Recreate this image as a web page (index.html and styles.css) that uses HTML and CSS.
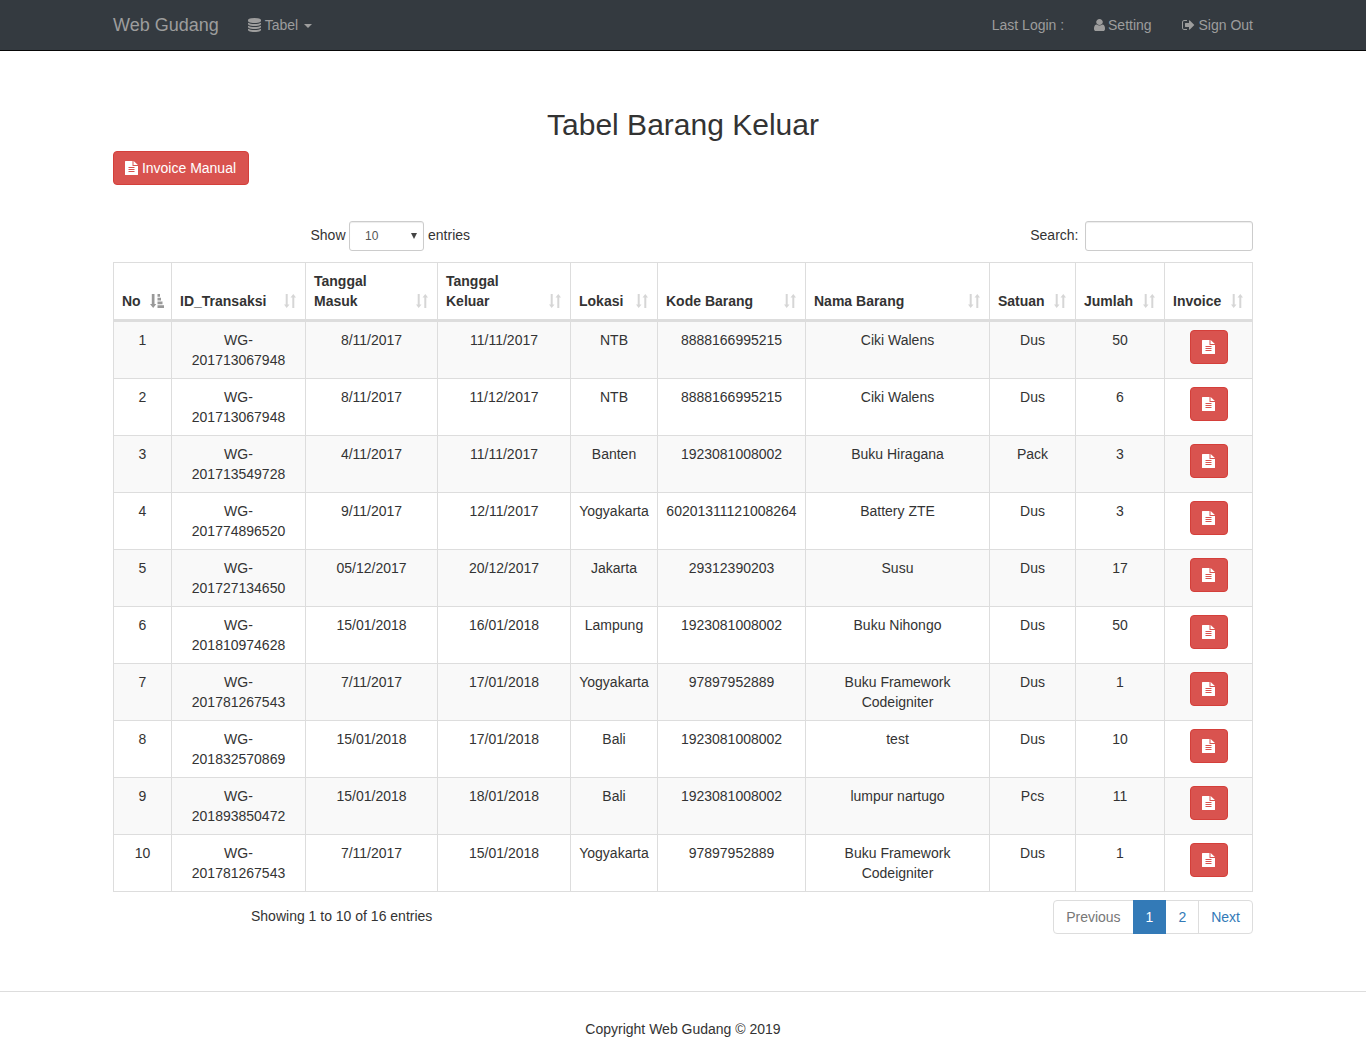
FILE: index.html
```html
<!DOCTYPE html>
<html lang="id">
<head>
<meta charset="utf-8">
<title>Web Gudang | Tabel Barang Keluar</title>
<link rel="stylesheet" href="styles.css">
</head>
<body>
<svg class="sprite" aria-hidden="true">
  <symbol id="database" viewBox="128 0 1536 1792" preserveAspectRatio="none"><path d="M896 768q237 0 443-43t325-127v170q0 69-103 128t-280 93.5-385 34.5-385-34.5-280-93.5-103-128v-170q119 84 325 127t443 43zm0 768q237 0 443-43t325-127v170q0 69-103 128t-280 93.5-385 34.5-385-34.5-280-93.5-103-128v-170q119 84 325 127t443 43zm0-384q237 0 443-43t325-127v170q0 69-103 128t-280 93.5-385 34.5-385-34.5-280-93.5-103-128v-170q119 84 325 127t443 43zm0-1152q208 0 385 34.5t280 93.5 103 128v128q0 69-103 128t-280 93.5-385 34.5-385-34.5-280-93.5-103-128v-128q0-69 103-128t280-93.5 385-34.5z"/></symbol>
  <symbol id="user" viewBox="256 0 1280 1792" preserveAspectRatio="none"><path d="M1536 1399q0 109-62.5 187t-150.5 78h-854q-88 0-150.5-78t-62.5-187q0-85 8.5-160.5t31.5-152 58.5-131 94-89 134.5-34.5q131 128 313 128t313-128q76 0 134.5 34.5t94 89 58.5 131 31.5 152 8.5 160.5zm-256-887q0 159-112.5 271.5t-271.500 112.5-271.500-112.500-112.500-271.500 112.500-271.500 271.500-112.500 271.500 112.500 112.500 271.500z"/></symbol>
  <symbol id="sign-out" viewBox="64 0 1664 1792"><path d="M704 1440q0 4 1 20t.5 26.5-3 23.5-10 19.5-20.5 6.5h-320q-119 0-203.5-84.5t-84.5-203.5v-704q0-119 84.5-203.5t203.5-84.5h320q13 0 22.5 9.5t9.5 22.5q0 4 1 20t.5 26.5-3 23.5-10 19.5-20.5 6.5h-320q-66 0-113 47t-47 113v704q0 66 47 113t113 47h312l11.5 1 11.5 3 8 5.5 7 9 2 13.5zm928-544q0 26-19 45l-544 544q-19 19-45 19t-45-19-19-45v-288h-448q-26 0-45-19t-19-45v-384q0-26 19-45t45-19h448v-288q0-26 19-45t45-19 45 19l544 544q19 19 19 45z"/></symbol>
  <symbol id="file" viewBox="0 0 13 14"><path fill-rule="evenodd" d="M.6 0H7.500v5H13v8.400q0 .6-.6.6H.6q-.6 0-.6-.6V.6Q0 0 .6 0zM3.500 6v1h6V6zM3.500 8v1h6V8zM3.500 10v1h6v-1zM8.500 0q.4.100.7.400l3.200 3q.3.300.4.700H8.500z"/></symbol>
  <symbol id="sort" viewBox="0 0 12 14"><path d="M1.700 0h2v10.500h1.800L2.700 14 0 10.500h1.700zM8.300 14h2V3.500H12L9.300 0 6.500 3.500h1.800z"/></symbol>
  <symbol id="sort-asc" viewBox="0 0 14 14"><path d="M1.800 0h2.700v10H6.300L3.200 14 0 10h1.800zM7.500 0h2.500v2.700H7.500zM7.500 3.700h3.500v2.700H7.500zM7.500 7.500h5v2.700h-5zM7.500 11.300h6.500V14H7.500z"/></symbol>
</svg>

<nav class="navbar">
  <div class="container">
    <a class="brand">Web Gudang</a>
    <a class="link"><svg class="fa w13"><use href="#database"/></svg> Tabel <span class="caret"></span></a>
    <div class="right">
      <a class="link">Last Login :</a>
      <a class="link"><svg class="fa user"><use href="#user"/></svg> Setting</a>
      <a class="link"><svg class="fa w13"><use href="#sign-out"/></svg> Sign Out</a>
    </div>
  </div>
</nav>

<main class="container">
  <h2>Tabel Barang Keluar</h2>
  <a class="btn"><svg class="fa file"><use href="#file"/></svg> Invoice Manual</a>

  <div class="controls">
    <label class="length">Show <span class="select"><span>10</span><i class="arrow"></i></span> entries</label>
    <label class="search">Search:<input type="search"></label>
  </div>

  <table>
    <colgroup><col class="c1"><col class="c2"><col class="c3"><col class="c4"><col class="c5"><col class="c6"><col class="c7"><col class="c8"><col class="c9"><col class="c10"></colgroup>
    <thead><tr>
      <th>No<svg class="sort on"><use href="#sort-asc"/></svg></th>
      <th>ID_Transaksi<svg class="sort"><use href="#sort"/></svg></th>
      <th>Tanggal Masuk<svg class="sort"><use href="#sort"/></svg></th>
      <th>Tanggal Keluar<svg class="sort"><use href="#sort"/></svg></th>
      <th>Lokasi<svg class="sort"><use href="#sort"/></svg></th>
      <th>Kode Barang<svg class="sort"><use href="#sort"/></svg></th>
      <th>Nama Barang<svg class="sort"><use href="#sort"/></svg></th>
      <th>Satuan<svg class="sort"><use href="#sort"/></svg></th>
      <th>Jumlah<svg class="sort"><use href="#sort"/></svg></th>
      <th>Invoice<svg class="sort"><use href="#sort"/></svg></th>
    </tr></thead>
    <tbody>
      <tr><td>1</td><td>WG-201713067948</td><td>8/11/2017</td><td>11/11/2017</td><td>NTB</td><td>8888166995215</td><td>Ciki Walens</td><td>Dus</td><td>50</td><td><a class="btn"><svg class="fa file"><use href="#file"/></svg></a></td></tr>
      <tr><td>2</td><td>WG-201713067948</td><td>8/11/2017</td><td>11/12/2017</td><td>NTB</td><td>8888166995215</td><td>Ciki Walens</td><td>Dus</td><td>6</td><td><a class="btn"><svg class="fa file"><use href="#file"/></svg></a></td></tr>
      <tr><td>3</td><td>WG-201713549728</td><td>4/11/2017</td><td>11/11/2017</td><td>Banten</td><td>1923081008002</td><td>Buku Hiragana</td><td>Pack</td><td>3</td><td><a class="btn"><svg class="fa file"><use href="#file"/></svg></a></td></tr>
      <tr><td>4</td><td>WG-201774896520</td><td>9/11/2017</td><td>12/11/2017</td><td>Yogyakarta</td><td>60201311121008264</td><td>Battery ZTE</td><td>Dus</td><td>3</td><td><a class="btn"><svg class="fa file"><use href="#file"/></svg></a></td></tr>
      <tr><td>5</td><td>WG-201727134650</td><td>05/12/2017</td><td>20/12/2017</td><td>Jakarta</td><td>29312390203</td><td>Susu</td><td>Dus</td><td>17</td><td><a class="btn"><svg class="fa file"><use href="#file"/></svg></a></td></tr>
      <tr><td>6</td><td>WG-201810974628</td><td>15/01/2018</td><td>16/01/2018</td><td>Lampung</td><td>1923081008002</td><td>Buku Nihongo</td><td>Dus</td><td>50</td><td><a class="btn"><svg class="fa file"><use href="#file"/></svg></a></td></tr>
      <tr><td>7</td><td>WG-201781267543</td><td>7/11/2017</td><td>17/01/2018</td><td>Yogyakarta</td><td>97897952889</td><td>Buku Framework Codeigniter</td><td>Dus</td><td>1</td><td><a class="btn"><svg class="fa file"><use href="#file"/></svg></a></td></tr>
      <tr><td>8</td><td>WG-201832570869</td><td>15/01/2018</td><td>17/01/2018</td><td>Bali</td><td>1923081008002</td><td>test</td><td>Dus</td><td>10</td><td><a class="btn"><svg class="fa file"><use href="#file"/></svg></a></td></tr>
      <tr><td>9</td><td>WG-201893850472</td><td>15/01/2018</td><td>18/01/2018</td><td>Bali</td><td>1923081008002</td><td>lumpur nartugo</td><td>Pcs</td><td>11</td><td><a class="btn"><svg class="fa file"><use href="#file"/></svg></a></td></tr>
      <tr><td>10</td><td>WG-201781267543</td><td>7/11/2017</td><td>15/01/2018</td><td>Yogyakarta</td><td>97897952889</td><td>Buku Framework Codeigniter</td><td>Dus</td><td>1</td><td><a class="btn"><svg class="fa file"><use href="#file"/></svg></a></td></tr>
    </tbody>
  </table>

  <div class="below">
    <div class="info">Showing 1 to 10 of 16 entries</div>
    <div class="pages"><a class="off">Previous</a><a class="active">1</a><a>2</a><a>Next</a></div>
  </div>
</main>

<footer>Copyright Web Gudang © 2019</footer>
</body>
</html>
```
FILE: styles.css
```css
* { box-sizing: border-box; }
body {
  margin: 0;
  font: 14px/20px "Liberation Sans", Arial, sans-serif;
  color: #333;
  background: #fff;
}
.sprite { display: none; }
.container { width: 1140px; margin: 0 auto; }

.navbar { height: 51px; background: #343a40; border-bottom: 1px solid #080808; color: #9d9d9d; }
.navbar .container { display: flex; height: 50px; align-items: center; }
.brand { font-size: 18px; margin-right: 15px; width: 105px; white-space: nowrap; }
.link { padding: 0 15px; white-space: nowrap; }
.right { display: flex; margin-left: auto; margin-right: -15px; }
.caret { display: inline-block; vertical-align: middle; margin-left: 2px; border-top: 4px solid; border-left: 4px solid transparent; border-right: 4px solid transparent; }
.fa { display: inline-block; height: 14px; fill: currentColor; vertical-align: -2px; }
.user { width: 11px; margin-right: -1px; }
.w13 { width: 13px; }
.file { width: 13px; margin-left: -1px; }

h2 { margin: 57px 0 10px; font-size: 30px; font-weight: 500; line-height: 33px; text-align: center; }
.btn {
  display: inline-block;
  padding: 6px 12px;
  border: 1px solid #d43f3a;
  border-radius: 4px;
  background: #d9534f;
  color: #fff;
  vertical-align: top;
  white-space: nowrap;
}

.controls { display: flex; justify-content: space-between; margin-top: 36px; height: 30px; padding-left: 197px; line-height: 28px; }
.length, .search { display: flex; }
.length { padding-left: .5px; }
.select {
  display: flex;
  align-items: center;
  justify-content: space-between;
  width: 75px;
  height: 30px;
  margin: 0 4px 0 3.5px;
  padding: 0 6px 0 15px;
  border: 1px solid #ccc;
  border-radius: 3px;
  box-shadow: inset 0 1px 1px rgba(0,0,0,.075);
  font-size: 12px;
  color: #555;
}
.arrow { border-top: 6px solid #444; border-left: 3px solid transparent; border-right: 3px solid transparent; }
.search input { width: 168px; height: 30px; margin: 0 0 0 6.5px; padding: 5px 10px; border: 1px solid #ccc; border-radius: 3px; box-shadow: inset 0 1px 1px rgba(0,0,0,.075); background: #fff; }

table {
  width: 1140px;
  margin-top: 11px;
  table-layout: fixed;
  border-collapse: separate;
  border-spacing: 0;
}
.c1 { width: 58px; }
.c2 { width: 134px; }
.c3 { width: 132px; }
.c4 { width: 133px; }
.c5 { width: 87px; }
.c6 { width: 148px; }
.c7 { width: 184px; }
.c8 { width: 86px; }
.c9 { width: 89px; }
.c10 { width: 89px; }
th, td { border-left: 1px solid #ddd; border-bottom: 1px solid #ddd; }
th:last-child, td:last-child { border-right: 1px solid #ddd; }
th {
  position: relative;
  height: 60px;
  padding: 8px 30px 8px 8px;
  border-top: 1px solid #ddd;
  border-bottom-width: 3px;
  text-align: left;
  vertical-align: bottom;
}
td { height: 57px; padding: 8px; text-align: center; vertical-align: top; }
th:first-child { padding-right: 20px; }
tbody tr:nth-child(odd) { background: #f9f9f9; }
.sort { position: absolute; right: 8px; bottom: 11px; width: 14px; height: 14px; fill: #d6d6d6; }
.sort.on { right: 7px; fill: #999; }

.below { display: flex; justify-content: space-between; padding: 8px 0 0 138px; }
.info { padding-top: 6px; }
.pages { display: flex; }
.pages a { padding: 6px 12px; border: 1px solid #ddd; margin-left: -1px; color: #337ab7; }
.pages a:first-child { border-radius: 4px 0 0 4px; }
.pages a:last-child { border-radius: 0 4px 4px 0; }
.pages .off { color: #777; }
.pages .active { background: #337ab7; border-color: #337ab7; color: #fff; position: relative; }

footer { margin-top: 57px; border-top: 1px solid #ddd; padding: 27px 0 18px; text-align: center; }
```
